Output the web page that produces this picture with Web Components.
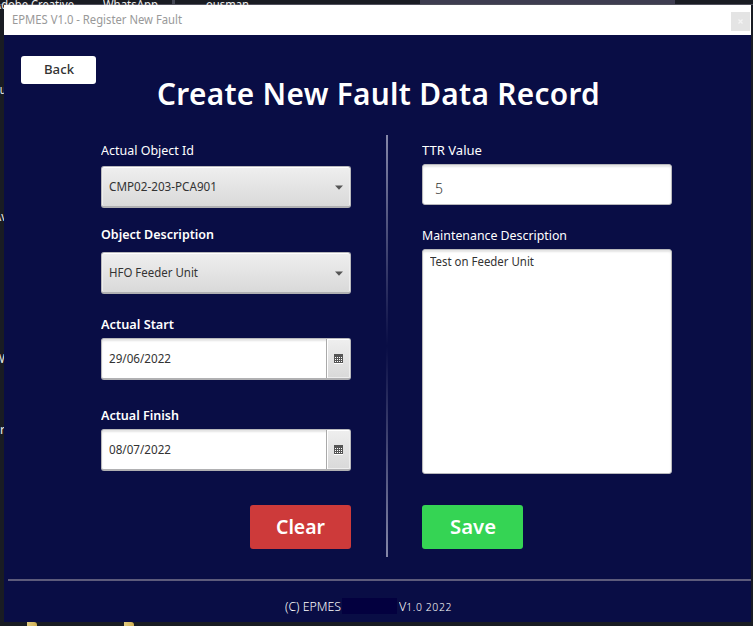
<!DOCTYPE html>
<html lang="en">
<head>
<meta charset="utf-8">
<title>EPMES V1.0 - Register New Fault</title>
<style>
body{margin:0;background:#191c23;font-family:"Noto Sans","Open Sans",sans-serif}
</style>
</head>
<body>
<fault-desktop></fault-desktop>
<script>
const define=(name,html,setup)=>customElements.define(name,class extends HTMLElement{
  connectedCallback(){
    if(this.shadowRoot)return;
    const root=this.attachShadow({mode:'open'});
    const t=document.createElement('template');
    t.innerHTML=html;
    root.append(t.content.cloneNode(true));
    if(setup)setup(this,root);
  }
});

/* One line of text, condensed or widened to the width given in "w". */
define('fit-text',`<style>
:host{display:block;white-space:nowrap;line-height:18px;height:18px;font-size:13px}
span{display:inline-block;transform-origin:0 50%}
</style><span><slot></slot></span>`,(host,root)=>{
  const span=root.querySelector('span'),w=+host.getAttribute('w');
  host.style.width=w+'px';
  span.style.transform='scaleX('+w/span.getBoundingClientRect().width+')';
});

define('title-bar',`<style>
:host{display:flex;height:30px;background:#fff;color:#999;justify-content:space-between;padding:0 1px 0 8px;box-sizing:border-box}
fit-text{margin-top:6px;font-size:12px}
i{width:19px;height:19px;margin-top:7px;background:#e4e4e4;display:grid;place-items:center}
svg{display:block}
</style><fit-text w="170"><slot></slot></fit-text>
<i><svg width="5" height="5" viewBox="0 0 5 5"><path d="M.5.5l4 4M4.5.5l-4 4" stroke="#f4f4f4" stroke-width="1.3"/></svg></i>`);

define('push-button',`<style>
:host{display:flex;justify-content:center;box-sizing:border-box;border-radius:3px;font-weight:600}
</style><slot></slot>`);

define('field-label',`<style>
:host{display:block;color:#fff;font-size:13px;height:18px}
:host([strong]){font-weight:600}
</style><slot></slot>`);

define('select-box',`<style>
:host{display:flex;justify-content:space-between;box-sizing:border-box;width:250px;height:42px;padding:11px 7px 0 7px;border:1px solid #b8b8bc;border-bottom:2px solid #b0b0b2;border-radius:3px;background:linear-gradient(#efefef,#d9d9d9);box-shadow:inset 0 1px #fff,inset 1px 0 #eee,inset -1px 0 #eee;color:#333}
svg{margin-top:7px}
fit-text{font-size:12px}
</style><slot></slot><svg width="8" height="5" viewBox="0 0 8 5"><path d="M0 .5h8L4 4.8z" fill="#555"/></svg>`);

define('date-box',`<style>
:host{display:flex;box-sizing:border-box;width:250px;height:42px;border:1px solid #b8b8bc;border-bottom:2px solid #b0b0b2;border-radius:3px;background:#fff;color:#333;box-shadow:inset 0 2px 2px #e4e4e4;overflow:hidden}
div{flex:1;padding:11px 0 0 7px}
i{width:24px;border-left:1px solid #aaa;background:linear-gradient(#efefef,#d9d9d9);box-shadow:inset 1px 1px #fff,inset -1px -1px #eee;box-sizing:border-box;padding:15px 0 0 7px}
svg{display:block}
</style><div><slot></slot></div><i><svg width="9" height="10" viewBox="0 0 9 10" shape-rendering="crispEdges"><path d="M0 0h9v9H0z" fill="#555"/><path d="M0 9h9v1H0z" fill="#fff"/><path d="M1 3h1v1H1zM3 3h1v1H3zM5 3h1v1H5zM7 3h1v1H7zM1 5h1v1H1zM3 5h1v1H3zM5 5h1v1H5zM7 5h1v1H7zM1 7h1v1H1zM3 7h1v1H3zM5 7h1v1H5zM7 7h1v1H7z" fill="#fff"/></svg></i>`);

define('text-box',`<style>
:host{display:block;box-sizing:border-box;width:250px;border:1px solid #b8b8bc;border-radius:3px;background:#fff;color:#333;box-shadow:inset 0 2px 2px #e4e4e4}
</style><slot></slot>`);

define('app-footer',`<style>
:host{display:flex;margin-left:4px;border-top:2px solid #5d5b7b;height:41px;box-sizing:border-box;padding:17px 0 0 277px;color:#fff;font-size:12px}
i{width:55px;height:16px;background:#03003f;margin:0 2px 0 1px}
small{font-size:10px;letter-spacing:.6px}
</style><fit-text style="font-size:12px;font-weight:300" w="56">(C) EPMES</fit-text><i></i><fit-text style="font-size:12px;font-weight:300" w="53">V<small>1.0 2022</small></fit-text>`);

define('fault-form',`<style>
:host{display:grid;grid-template-columns:250px 2px 250px;column-gap:35px;padding-left:97px;height:444px}
.col{display:flex;flex-direction:column}
.rule{height:422px;background:linear-gradient(#8587a8,#8587a800 50%,#8587a8)}
.l{padding-top:6px}.r{padding-top:6px;margin-left:-1px}
</style>
<div class="col l">
<field-label><fit-text w="93">Actual Object Id</fit-text></field-label>
<select-box style="margin-top:7px"><fit-text style="font-size:12px" w="108">CMP02-203-PCA901</fit-text></select-box>
<field-label strong style="margin-top:17px"><fit-text w="113">Object Description</fit-text></field-label>
<select-box style="margin-top:9px"><fit-text style="font-size:12px" w="89">HFO Feeder Unit</fit-text></select-box>
<field-label strong style="margin-top:21px"><fit-text w="73">Actual Start</fit-text></field-label>
<date-box style="margin-top:5px"><fit-text style="font-size:12px" w="62">29/06/2022</fit-text></date-box>
<field-label strong style="margin-top:26px"><fit-text w="78">Actual Finish</fit-text></field-label>
<date-box style="margin-top:5px"><fit-text style="font-size:12px" w="62">08/07/2022</fit-text></date-box>
<push-button style="align-self:flex-end;width:101px;height:44px;margin-top:34px;background:#cd3a3a;color:#fff;padding-top:9px"><fit-text style="font-size:20px;line-height:26px;height:26px" w="49">Clear</fit-text></push-button>
</div>
<div class="rule"></div>
<div class="col r">
<field-label><fit-text w="60">TTR Value</fit-text></field-label>
<text-box style="margin-top:5px;height:41px;padding:14px 0 0 12px"><fit-text style="font-size:15px;font-weight:300" w="8">5</fit-text></text-box>
<field-label style="margin-top:21px"><fit-text w="145">Maintenance Description</fit-text></field-label>
<text-box style="margin-top:5px;height:225px;padding:3px 0 0 7px"><fit-text style="font-size:12px" w="104">Test on Feeder Unit</fit-text></text-box>
<push-button style="width:101px;height:44px;margin-top:31px;background:#35d454;color:#fff;padding-top:9px"><fit-text style="font-size:20px;line-height:26px;height:26px" w="46">Save</fit-text></push-button>
</div>`);

define('fault-window',`<style>
:host{display:block;width:747px;height:617px;overflow:hidden;background:#090d45}
h1{margin:0;font-size:30px;font-weight:600;color:#fff;height:61px;padding:0 0 0 153px}
</style>
<title-bar>EPMES V1.0 - Register New Fault</title-bar>
<push-button style="width:75px;height:28px;margin:21px 0 0 17px;background:#fff;color:#333;padding-top:4px;font-weight:500"><fit-text w="30">Back</fit-text></push-button>
<h1><fit-text style="font-size:30px;line-height:40px;height:40px;margin-top:-10px;letter-spacing:.3px" w="443">Create New Fault Data Record</fit-text></h1>
<fault-form></fault-form>
<app-footer></app-footer>`);

/* Desktop behind the window; only slivers of its icons and captions show. */
define('fault-desktop',`<style>
:host{display:block;position:relative;width:753px;height:626px;overflow:hidden;box-sizing:border-box;padding:5px 2px 4px 4px;background:linear-gradient(90deg,transparent 420px,#3e3d50 420px 675px,transparent 675px) 0 0/100% 5px no-repeat,linear-gradient(90deg,transparent 172px,#444754 172px 175px,transparent 175px) 0 0/100% 5px no-repeat,#191c23}
:host::before{content:"";position:absolute;left:0;top:4px;width:753px;height:1px;background:#50505c}
fault-window{position:relative}
.cap{position:absolute;color:#eee;font-size:12px}
.file{position:absolute;top:622px;width:10px;height:4px;background:linear-gradient(90deg,#e0ca80,#cfae50);border-top-right-radius:3px}
</style>
<fit-text class="cap" style="left:-6px;top:-4px;font-size:12px" w="80">Adobe Creative</fit-text>
<fit-text class="cap" style="left:103px;top:-4px;font-size:12px" w="55">WhatsApp</fit-text>
<fit-text class="cap" style="left:206px;top:-4px;font-size:12px" w="43">ousman</fit-text>
<fit-text class="cap" style="left:-6px;top:81px;font-size:12px" w="12">Su</fit-text>
<fit-text class="cap" style="left:-6px;top:208px;font-size:12px" w="13">Av</fit-text>
<fit-text class="cap" style="left:-6px;top:350px;font-size:12px" w="11">W</fit-text>
<fit-text class="cap" style="left:0px;top:421px;font-size:12px" w="5">r</fit-text>
<div class="file" style="left:27px"></div><div class="file" style="left:124px"></div>
<fault-window></fault-window>`);
</script>
</body>
</html>
